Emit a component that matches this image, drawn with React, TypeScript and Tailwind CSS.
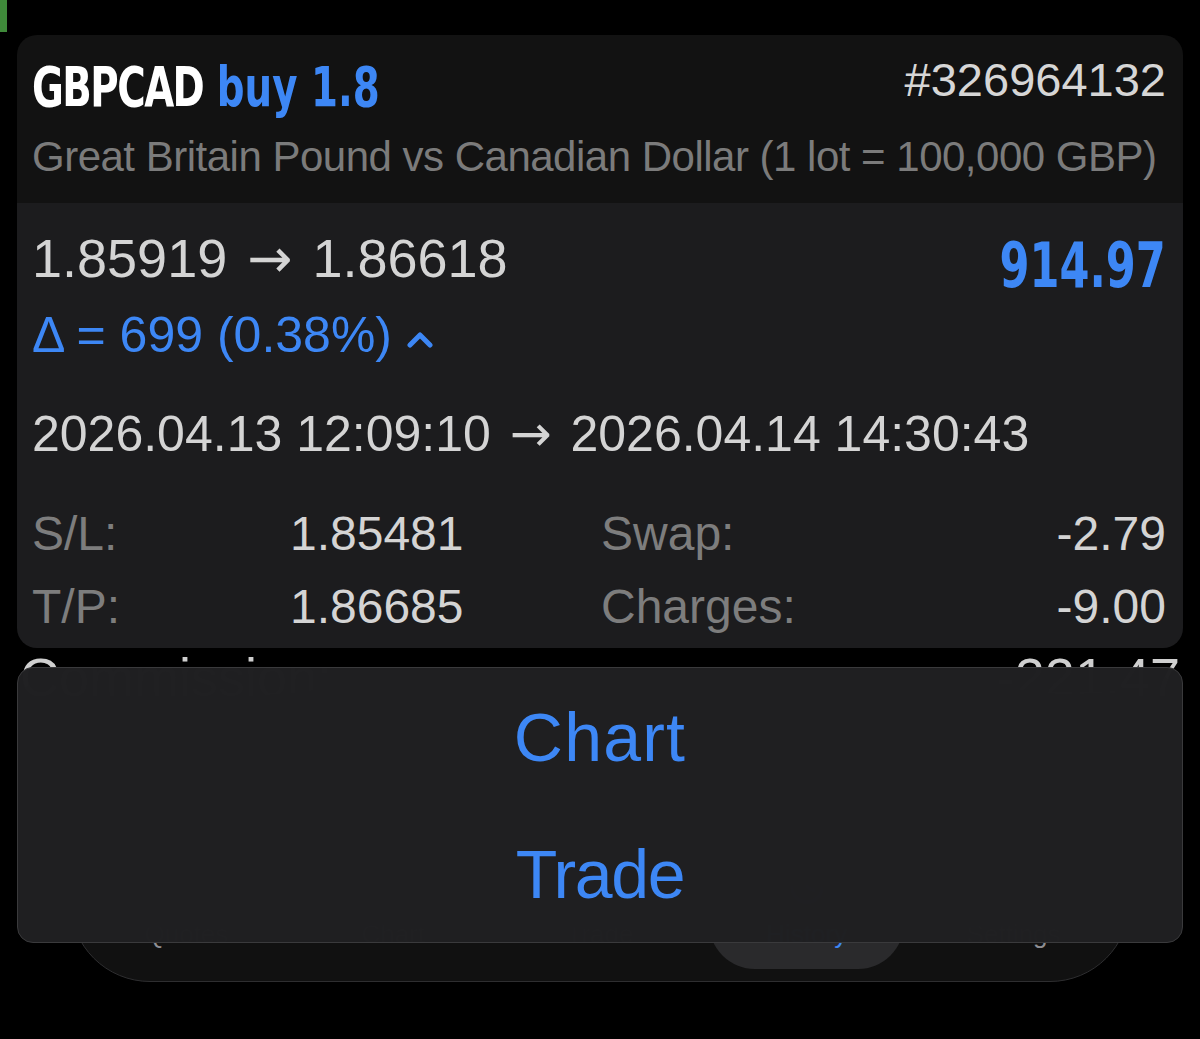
import { ArrowUpDown, CandlestickChart, TrendingUp, History, Settings } from "lucide-react";

const tabs = [
  { label: "Quotes", Icon: ArrowUpDown },
  { label: "Chart", Icon: CandlestickChart },
  { label: "Trade", Icon: TrendingUp },
  { label: "History", Icon: History, active: true },
  { label: "Settings", Icon: Settings },
];

function Caret() {
  return (
    <svg width="26" height="16" viewBox="0 0 26 16" className="ml-[15px] mt-[10px]">
      <path d="M3 13 L13 3 L23 13" fill="none" stroke="#3d87f5" strokeWidth="5" strokeLinecap="round" strokeLinejoin="round" />
    </svg>
  );
}

function Arrow() {
  return <span className="font-['DejaVu_Sans',sans-serif] px-[5px]">→</span>;
}

export default function App() {
  return (
    <div className="relative w-full min-h-[1039px] overflow-hidden bg-black font-['Liberation_Sans',Arial,sans-serif]">
      <div className="h-[35px]">
        <div className="w-[7px] h-[32px] bg-[#3f8a3a]" />
      </div>

      {/* position card */}
      <div className="mx-[17px] rounded-[20px] overflow-hidden">
        <div className="h-[168px] bg-[#121212] pt-[24px] pl-[15px] pr-[17px]">
          <div className="flex items-start justify-between h-[56px]">
            <div className="inline-block origin-left scale-x-[0.77] whitespace-nowrap text-[56px] leading-none font-bold font-['DejaVu_Sans_Condensed','DejaVu_Sans',sans-serif]">
              <span className="text-white tracking-[-2px]">GBPCAD</span>{" "}
              <span className="text-[#3d87f5]">buy 1.8</span>
            </div>
            <div className="-mt-[3px] text-[47px] leading-none text-[#d6d6d6]">#326964132</div>
          </div>
          <div className="mt-[21px] text-[42px] leading-none tracking-[-0.5px] text-[#7b7b7b] whitespace-nowrap">
            Great Britain Pound vs Canadian Dollar (1 lot = 100,000 GBP)
          </div>
        </div>

        <div className="bg-[#1c1c1e] pt-[28px] pb-[5px] pl-[15px] pr-[17px]">
          <div className="flex items-start justify-between h-[54px]">
            <div className="text-[54px] leading-none text-[#d4d4d4] whitespace-nowrap">
              1.85919 <Arrow /> 1.86618
            </div>
            <div className="mt-[3px] inline-block origin-right scale-x-[0.76] text-[63px] leading-none font-bold text-[#3d87f5] font-['DejaVu_Sans_Condensed','DejaVu_Sans',sans-serif]">
              914.97
            </div>
          </div>
          <div className="mt-[25px] h-[50px] flex items-center text-[50px] leading-none text-[#3d87f5]">
            <span>Δ = 699 (0.38%)</span>
            <Caret />
          </div>
          <div className="mt-[49px] h-[50px] text-[50px] leading-none text-[#d4d4d4] whitespace-nowrap">
            2026.04.13 12:09:10 <Arrow /> 2026.04.14 14:30:43
          </div>
          <div className="mt-[38px] grid grid-cols-[258px_311px_1fr_auto] text-[48px] leading-[73px]">
            <div className="text-[#7d7d7d]">S/L:</div>
            <div className="text-[#d4d4d4]">1.85481</div>
            <div className="text-[#7d7d7d]">Swap:</div>
            <div className="text-right text-[#d4d4d4]">-2.79</div>
            <div className="text-[#7d7d7d]">T/P:</div>
            <div className="text-[#d4d4d4]">1.86685</div>
            <div className="text-[#7d7d7d]">Charges:</div>
            <div className="text-right text-[#d4d4d4]">-9.00</div>
          </div>
        </div>
      </div>

      {/* rows beneath the action sheet */}
      <div className="mt-[2px] flex justify-between pl-[20px] pr-[20px] text-[54px] leading-none text-[#cfcfcf]">
        <span>Commission:</span>
        <span>-221.47</span>
      </div>
      <div className="mt-[20px] flex justify-between pl-[32px] pr-[30px] text-[48px] leading-none text-[#9a9a9a]">
        <span>Balance:</span>
        <span>9 112.35</span>
      </div>

      {/* floating tab bar */}
      <div className="mt-[50px] mx-[70px] h-[160px] rounded-[80px] border-[1.5px] border-[#2e2e30] bg-[#111111] px-[12px] py-[12px] grid grid-cols-5">
        {tabs.map(({ label, Icon, active }) => (
          <div
            key={label}
            className={
              active
                ? "mx-[6px] rounded-[46px] bg-[#2a2a2c] flex flex-col items-center justify-end pb-[22px] gap-[14px] text-[#3d87f5]"
                : "flex flex-col items-center justify-end pb-[22px] gap-[14px] text-[#8e8e93]"
            }
          >
            <Icon size={40} strokeWidth={2} />
            <span className="text-[26px] leading-none">{label}</span>
          </div>
        ))}
      </div>

      {/* action sheet */}
      <div className="absolute left-[17px] right-[17px] top-[667px] h-[276px] rounded-[16px] border-[1.5px] border-[#3a3a3c] bg-[#1f1f21]/[0.99] backdrop-blur-[32px] flex flex-col">
        <button className="flex-1 flex items-center justify-center text-[68px] leading-none tracking-[1.2px] text-[#3d87f5]">
          Chart
        </button>
        <button className="flex-1 flex items-center justify-center text-[68px] leading-none tracking-[-1.3px] text-[#3d87f5]">
          Trade
        </button>
      </div>
    </div>
  );
}
